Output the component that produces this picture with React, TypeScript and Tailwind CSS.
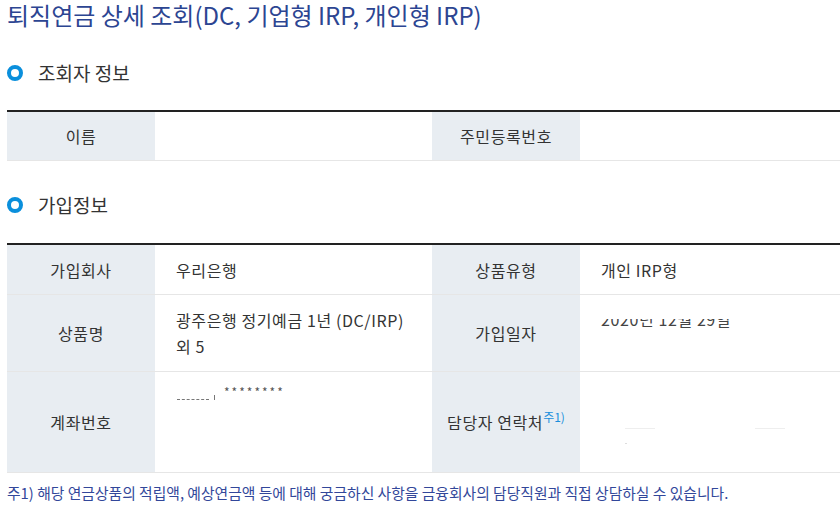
const font = { fontFamily: '"Noto Sans CJK KR", "Noto Sans", sans-serif' }

function SectionTitle({ children }: { children: React.ReactNode }) {
  return (
    <h2 className="flex items-center gap-[15px] text-[19px] text-[#333]">
      <span className="size-4 rounded-full border-[4px] border-[#0a8fdc]" aria-hidden="true" />
      {children}
    </h2>
  )
}

const th = 'flex items-center justify-center bg-[#e8edf2] text-[16px] tracking-[0.6px] text-[#333]'
const td = 'flex items-center bg-white pl-[21px] text-[16px] tracking-[0.6px] text-[#333]'

export default function App() {
  return (
    <div className="h-[512px] w-[840px] overflow-hidden bg-white pl-[7px]" style={font}>
      <h1 className="pt-px text-[24px] leading-[28px] text-[#2c4592]">
        퇴직연금 상세 조회(DC, 기업형 IRP, 개인형 IRP)
      </h1>

      <div className="mt-[30px]">
        <SectionTitle>조회자 정보</SectionTitle>
      </div>

      <div className="mt-[22px] grid grid-cols-[148px_277px_148px_1fr] border-t-2 border-[#222]">
        <div className={`${th} h-[49px] border-b border-[#e6e6e6]`}>이름</div>
        <div className={`${td} border-b border-[#e6e6e6]`} />
        <div className={`${th} border-b border-[#e6e6e6]`}>주민등록번호</div>
        <div className={`${td} border-b border-[#e6e6e6]`} />
      </div>

      <div className="mt-[30px]">
        <SectionTitle>가입정보</SectionTitle>
      </div>

      <div className="mt-[24px] grid grid-cols-[148px_277px_148px_1fr] border-t-2 border-[#222]">
        <div className={`${th} h-[50px] border-b border-[#e6e6e6]`}>가입회사</div>
        <div className={`${td} border-b border-[#e6e6e6]`}>우리은행</div>
        <div className={`${th} border-b border-[#e6e6e6]`}>상품유형</div>
        <div className={`${td} border-b border-[#e6e6e6]`}>개인 IRP형</div>

        <div className={`${th} h-[77px] border-b border-[#e6e6e6]`}>상품명</div>
        <div className={`${td} border-b border-[#e6e6e6] leading-[26px]`}>
          <p>
            광주은행 정기예금 1년 (DC/IRP)
            <br />외 5
          </p>
        </div>
        <div className={`${th} border-b border-[#e6e6e6]`}>가입일자</div>
        <div className="flex items-start border-b border-[#e6e6e6] bg-white pt-[24px] pl-[21px]">
          <div className="h-[9px] overflow-hidden">
            <p className="-mt-[10px] text-[16px] leading-[20px] tracking-[0.6px] text-[#444]">2020년 12월 29일</p>
          </div>
        </div>

        <div className={`${th} h-[101px] border-b border-[#e6e6e6]`}>계좌번호</div>
        <div className="flex items-start border-b border-[#e6e6e6] bg-white pt-[13px] pl-[22px] text-[#555]">
          <span className="mt-[14px] h-px w-[32px] border-t border-dashed border-[#777]" />
          <span className="mt-[10px] ml-[5px] h-[5px] w-px bg-[#777]" />
          <span className="ml-[9px] text-[12px] leading-[14px] tracking-[2px]">********</span>
        </div>
        <div className={`${th} border-b border-[#e6e6e6]`}>
          <span>
            담당자 연락처
            <sup className="-top-[7px] text-[12px] tracking-normal text-[#1a8fdc]">주1)</sup>
          </span>
        </div>
        <div className="flex flex-col gap-[14px] border-b border-[#e6e6e6] bg-white pt-[56px] pl-[45px]">
          <div className="flex gap-[100px]">
            <span className="h-px w-[30px] bg-[#eee]" />
            <span className="h-px w-[30px] bg-[#eee]" />
          </div>
          <span className="h-px w-[2px] bg-[#ddd]" />
        </div>
      </div>

      <p className="mt-[10px] text-[14.8px] leading-[20px] text-[#32479a]">
        주1) 해당 연금상품의 적립액, 예상연금액 등에 대해 궁금하신 사항을 금융회사의 담당직원과 직접 상담하실 수 있습니다.
      </p>
    </div>
  )
}
